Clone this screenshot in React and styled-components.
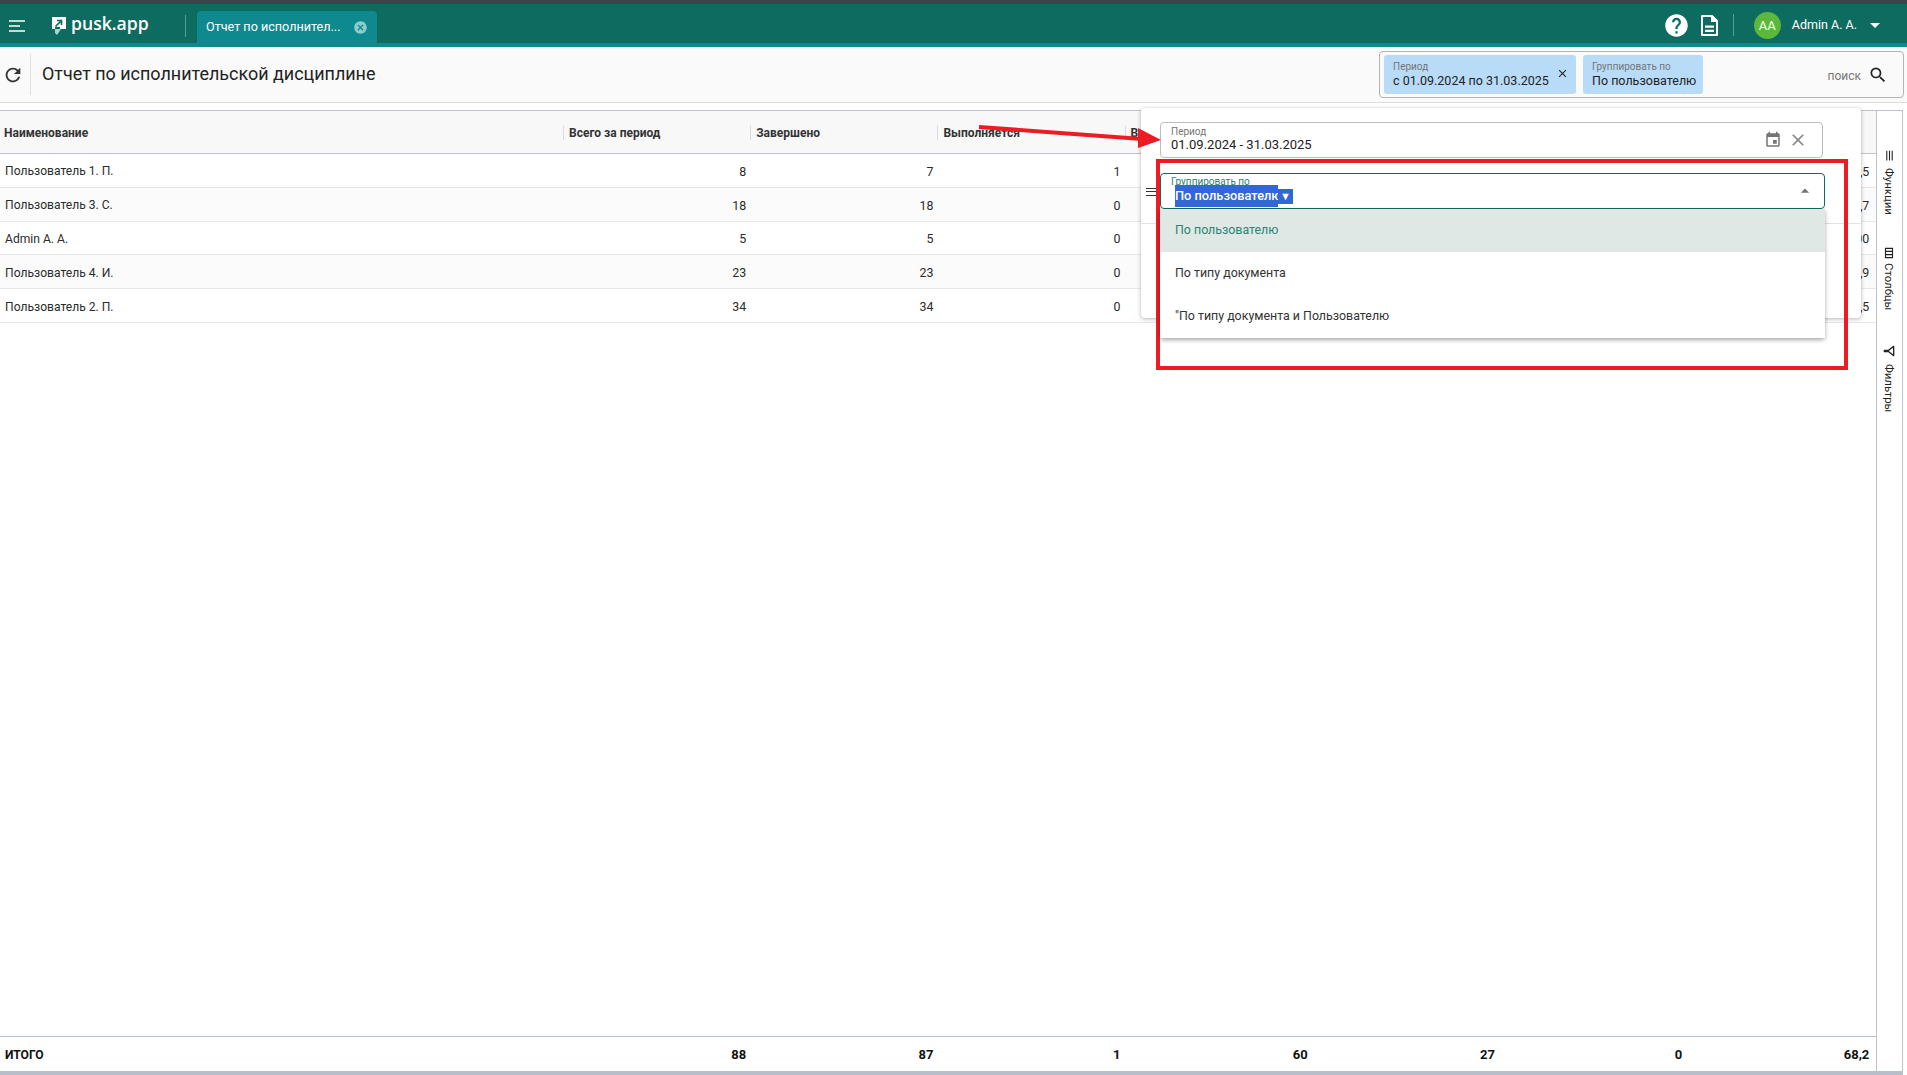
import styled, { createGlobalStyle } from 'styled-components';
import {
  MdRefresh, MdSearch, MdClose, MdEvent, MdHelp, MdArrowDropDown, MdArrowDropUp,
  MdCancel, MdMenu, MdOutlineFilterAlt, MdOutlineViewColumn,
} from 'react-icons/md';

const GlobalStyle = createGlobalStyle`
  html, body { margin: 0; padding: 0; height: 100%; background: #fff; overflow: hidden; }
  body { font-family: Roboto, "Liberation Sans", sans-serif; color: #222; }
  #root { height: 100%; }
`;

const rows = [
  { name: 'Пользователь 1. П.', cells: ['8', '7', '1', '5', '2', '0', '62,5'] },
  { name: 'Пользователь 3. С.', cells: ['18', '18', '0', '12', '6', '0', '66,7'] },
  { name: 'Admin A. A.', cells: ['5', '5', '0', '5', '0', '0', '100'] },
  { name: 'Пользователь 4. И.', cells: ['23', '23', '0', '17', '6', '0', '73,9'] },
  { name: 'Пользователь 2. П.', cells: ['34', '34', '0', '21', '13', '0', '61,5'] },
];
const heads = ['Всего за период', 'Завершено', 'Выполняется', 'Выполнено в срок', 'Просрочено', 'Отменено', '% в срок'];
const totals = ['88', '87', '1', '60', '27', '0', '68,2'];

const App = () => (
  <Page>
    <GlobalStyle />
    <TopEdge />
    <AppBar>
      <BarLeft>
        <Burger viewBox="0 0 16 12">
          <path d="M0 1h16M0 6h11M0 11h16" stroke="#fff" strokeWidth="1.7" fill="none" />
        </Burger>
        <Logo>
          <svg width="16" height="20" viewBox="0 0 16 20">
            <path d="M4 13h6l-4 6-2-2z" fill="#a9d6cd" />
            <path d="M1 1h14v12H9v-2H4v2H1z" fill="#fff" />
            <path d="M4.5 10.5L10 5M6 4.5h4.5V9" stroke="#0d6b5f" strokeWidth="1.7" fill="none" />
          </svg>
          <LogoText>pusk.app</LogoText>
        </Logo>
        <BarDivider />
        <Tab>
          <TabText>Отчет по исполнител...</TabText>
          <TabClose><MdCancel /></TabClose>
        </Tab>
      </BarLeft>
      <BarRight>
        <MdHelp size={27} color="#fff" />
        <DocIcon width="17" height="21" viewBox="0 0 17 21">
          <path d="M1 1h10l5 5v14H1z" fill="none" stroke="#fff" strokeWidth="2" strokeLinejoin="round" />
          <path d="M10 1h2l4 4v2h-6zM4 10.5h9v2.2H4zM4 14.8h9V17H4z" fill="#fff" />
        </DocIcon>
        <BarDivider />
        <Avatar>AA</Avatar>
        <UserName>Admin A. A.</UserName>
        <MdArrowDropDown size={24} color="#fff" />
      </BarRight>
    </AppBar>

    <Toolbar>
      <RefreshButton><MdRefresh size={22} /></RefreshButton>
      <Title>Отчет по исполнительской дисциплине</Title>
      <SearchBox>
        <Chip $width={192}>
          <ChipBody>
            <ChipLabel>Период</ChipLabel>
            <ChipValue>с 01.09.2024 по 31.03.2025</ChipValue>
          </ChipBody>
          <ChipClose><MdClose size={13} /></ChipClose>
        </Chip>
        <Chip $width={120}>
          <ChipBody>
            <ChipLabel>Группировать по</ChipLabel>
            <ChipValue>По пользователю</ChipValue>
          </ChipBody>
        </Chip>
        <SearchText>поиск</SearchText>
        <SearchIcon><MdSearch size={20} /></SearchIcon>
      </SearchBox>
    </Toolbar>

    <Main>
      <Table>
        <HeadRow>
          <HeadCell>Наименование</HeadCell>
          {heads.map((h) => <HeadCell key={h} $sep>{h}</HeadCell>)}
        </HeadRow>
        {rows.map((r, i) => (
          <Row key={r.name} $odd={i % 2 === 1}>
            <NameCell>{r.name}</NameCell>
            {r.cells.map((c, j) => <NumCell key={j}>{c}</NumCell>)}
          </Row>
        ))}
        <Spacer />
        <TotalRow>
          <NameCell>ИТОГО</NameCell>
          {totals.map((c, j) => <NumCell key={j}>{c}</NumCell>)}
        </TotalRow>
      </Table>

      <SideBar>
        <SideItem $gap={6}>
          <SideIcon><MdMenu size={13} /></SideIcon>
          Функции
        </SideItem>
        <SideItem $gap={3}>
          <SideIcon><MdOutlineViewColumn size={14} /></SideIcon>
          Столбцы
        </SideItem>
        <SideItem $gap={5}>
          <SideIcon><MdOutlineFilterAlt size={16} /></SideIcon>
          Фильтры
        </SideItem>
      </SideBar>

      <Popover>
        <PopRow>
          <Field>
            <FieldBody>
              <FieldLabel>Период</FieldLabel>
              <FieldValue>01.09.2024 - 31.03.2025</FieldValue>
            </FieldBody>
            <MdEvent size={18} color="#757575" />
            <MdClose size={20} color="#8a8a8a" />
          </Field>
        </PopRow>
        <PopRow $last>
          <DragHandle />
          <ActiveField>
            <ActiveBody>
              <FieldLabel $active>Группировать по</FieldLabel>
            </ActiveBody>
            <Selected>
              <SelectedText>По пользователю</SelectedText>
              <SelectedCaret>▼</SelectedCaret>
            </Selected>
            <MdArrowDropUp size={20} color="#757575" />
            <Menu>
              <MenuItem $on>По пользователю</MenuItem>
              <MenuItem>По типу документа</MenuItem>
              <MenuItem>"По типу документа и Пользователю</MenuItem>
            </Menu>
          </ActiveField>
        </PopRow>
      </Popover>

      <RedFrame />
      <RedArrow viewBox="0 0 190 30" width="190" height="30">
        <path d="M2 2L165 14" stroke="#ed1c24" strokeWidth="4" fill="none" />
        <path d="M161 3L184 15L161 23z" fill="#ed1c24" />
      </RedArrow>
    </Main>
  </Page>
);

export default App;

const Page = styled.div`
  display: flex;
  flex-direction: column;
  height: 1075px;
  overflow: hidden;
`;

const TopEdge = styled.div`
  height: 4px;
  background: #3f444b;
`;

const AppBar = styled.header`
  height: 39px;
  display: flex;
  align-items: stretch;
  justify-content: space-between;
  background: #0d6b5f;
  border-bottom: 4px solid #0e8a8f;
`;

const BarLeft = styled.div`
  display: flex;
  align-items: center;
  padding: 4px 0 0 9px;
`;

const Burger = styled.svg`
  width: 16px;
  height: 12px;
  margin-right: 26px;
`;

const Logo = styled.div`
  display: flex;
  align-items: center;
  gap: 4px;
  width: 134px;
  color: #fff;
`;

const LogoText = styled.span`
  font-family: "Open Sans", Roboto, sans-serif;
  font-size: 17.6px;
  font-weight: 600;
  line-height: 1;
  margin-top: -4px;
`;

const BarDivider = styled.div`
  width: 1px;
  height: 22px;
  background: #5d9d94;
`;

const Tab = styled.div`
  align-self: flex-end;
  display: flex;
  align-items: center;
  justify-content: space-between;
  box-sizing: border-box;
  width: 180px;
  height: 32px;
  margin-left: 11px;
  padding: 0 9px;
  background: #0e8a8f;
  border-radius: 4px 4px 0 0;
  color: #fff;
`;

const TabText = styled.span`
  font-size: 12.6px;
  white-space: nowrap;
  margin-top: -2px;
`;

const TabClose = styled.span`
  display: flex;
  font-size: 15px;
  color: #8fcccb;
`;

const BarRight = styled.div`
  display: flex;
  align-items: center;
  padding: 3px 20px 0 0;
`;

const DocIcon = styled.svg`
  margin: 0 15px 0 11px;
`;

const Avatar = styled.div`
  width: 27px;
  height: 27px;
  margin-left: 20px;
  border-radius: 50%;
  display: flex;
  align-items: center;
  justify-content: center;
  background: #5cb83c;
  color: #fff;
  font-size: 13px;
`;

const UserName = styled.span`
  margin: -2px 6px 0 11px;
  font-size: 12.5px;
  color: #fff;
`;

const Toolbar = styled.div`
  height: 55px;
  display: flex;
  align-items: center;
  background: #fafafa;
  border-bottom: 1px solid #dcdcdc;
  padding-right: 3px;
`;

const RefreshButton = styled.div`
  width: 31px;
  height: 41px;
  box-sizing: border-box;
  display: flex;
  align-items: center;
  padding-left: 2px;
  border-right: 1px solid #e2e2e2;
  color: #333;
  margin-right: 11px;
`;

const Title = styled.h1`
  margin: 0 0 2px;
  font-size: 17.95px;
  font-weight: 400;
  color: #222;
  flex: 1;
`;

const SearchBox = styled.div`
  width: 525px;
  height: 47px;
  box-sizing: border-box;
  display: flex;
  align-items: center;
  gap: 7px;
  padding: 0 15px 0 4px;
  border: 1px solid #b5b5b5;
  border-radius: 4px;
`;

const Chip = styled.div`
  width: ${(p) => p.$width}px;
  height: 39px;
  box-sizing: border-box;
  display: flex;
  align-items: center;
  justify-content: space-between;
  padding: 0 9px;
  background: #b8dcf8;
  border-radius: 3px;
`;

const ChipBody = styled.div`
  display: flex;
  flex-direction: column;
`;

const ChipClose = styled.span`
  display: flex;
  margin: -2px -2px 0 0;
`;

const ChipLabel = styled.span`
  font-size: 10px;
  line-height: 12px;
  color: #757575;
`;

const ChipValue = styled.span`
  font-size: 12.5px;
  line-height: 16px;
  color: #222;
  white-space: nowrap;
`;

const SearchText = styled.span`
  margin: 2px 0 0 auto;
  font-size: 12px;
  color: #777;
`;

const SearchIcon = styled.span`
  display: flex;
  color: #222;
`;

const Main = styled.main`
  flex: 1;
  position: relative;
  display: flex;
  padding-top: 7px;
  min-height: 0;
`;

const Table = styled.div`
  width: 1876px;
  display: flex;
  flex-direction: column;
  border-top: 1px solid #bfc3c9;
  border-bottom: 4px solid #b8bfca;
`;

const gridColumns = '563px repeat(7, 187.2px)';

const HeadRow = styled.div`
  display: grid;
  grid-template-columns: ${gridColumns};
  height: 42px;
  align-items: center;
  background: #f8f8f8;
  border-bottom: 1px solid #bfc3c9;
`;

const HeadCell = styled.div`
  height: 14px;
  line-height: 14px;
  margin-top: 2px;
  padding-left: ${(p) => (p.$sep ? '5px' : '4px')};
  border-left: ${(p) => (p.$sep ? '1px solid #dcdcdc' : 'none')};
  font-size: 12px;
  font-weight: 700;
  color: #333;
  white-space: nowrap;
  overflow: hidden;
`;

const Row = styled.div`
  display: grid;
  grid-template-columns: ${gridColumns};
  height: 33.8px;
  box-sizing: border-box;
  align-items: center;
  padding-top: 2px;
  background: ${(p) => (p.$odd ? '#fbfbfb' : '#fff')};
  border-bottom: 1px solid #e4e7ec;
  font-size: 12.4px;
  color: #2b2b2b;
`;

const NameCell = styled.div`
  padding-left: 5px;
  font-size: 12.1px;
  white-space: nowrap;
`;

const NumCell = styled.div`
  padding-right: 4px;
  text-align: right;
`;

const Spacer = styled.div`
  flex: 1;
`;

const TotalRow = styled.div`
  display: grid;
  grid-template-columns: ${gridColumns};
  height: 35px;
  box-sizing: border-box;
  padding-top: 1px;
  align-items: center;
  border-top: 1px solid #b8bfca;
  font-size: 13px;
  font-weight: 700;
  color: #111;
`;

const SideBar = styled.aside`
  width: 27px;
  box-sizing: border-box;
  display: flex;
  flex-direction: column;
  align-items: center;
  gap: 29px;
  padding: 38px 1px 0 0;
  border-top: 1px solid #bfc3c9;
  border-left: 1px solid #bfc3c9;
  border-right: 1px solid #bfc3c9;
  border-bottom: 4px solid #b8bfca;
`;

const SideItem = styled.div`
  writing-mode: vertical-rl;
  height: 68px;
  display: flex;
  align-items: center;
  gap: ${(p) => p.$gap}px;
  font-size: 11.4px;
  color: #222;
`;

const SideIcon = styled.span`
  display: flex;
  transform: rotate(90deg);
`;

const Popover = styled.div`
  position: absolute;
  top: 5px;
  right: 46px;
  width: 720px;
  height: 210px;
  box-sizing: border-box;
  background: #fff;
  border-radius: 4px;
  box-shadow: 0 1px 4px rgba(0, 0, 0, 0.3);
`;

const PopRow = styled.div`
  position: relative;
  padding: ${(p) => (p.$last ? '15px 36px 14px 19px' : '14px 38px 0 19px')};
  border-bottom: ${(p) => (p.$last ? '1px solid #e2e2e2' : 'none')};
`;

const DragHandle = styled.div`
  position: absolute;
  left: 5px;
  top: 30px;
  width: 10px;
  height: 6px;
  border-top: 1px solid #333;
  border-bottom: 1px solid #333;
  &::after {
    content: '';
    display: block;
    margin-top: 2px;
    border-top: 1px solid #333;
  }
`;

const Field = styled.div`
  height: 36px;
  box-sizing: border-box;
  display: flex;
  align-items: center;
  gap: 6px;
  padding: 0 14px 0 10px;
  border: 1px solid #bdbdbd;
  border-radius: 4px;
`;

const ActiveField = styled(Field)`
  position: relative;
  padding-right: 9px;
  border-color: #0d6b5f;
`;

const FieldBody = styled.div`
  flex: 1;
  display: flex;
  flex-direction: column;
  margin-top: -2px;
`;

const ActiveBody = styled(FieldBody)`
  align-self: flex-start;
  margin-top: 2px;
`;

const FieldLabel = styled.span`
  font-size: 10px;
  line-height: 11px;
  color: ${(p) => (p.$active ? '#2d8272' : '#757575')};
`;

const FieldValue = styled.span`
  font-size: 13px;
  line-height: 16px;
  color: #222;
`;

const Selected = styled.div`
  position: absolute;
  left: 14px;
  top: 11px;
  display: flex;
  align-items: center;
`;

const SelectedText = styled.span`
  width: 103px;
  height: 22px;
  overflow: hidden;
  background: #3366d6;
  color: #fff;
  font-size: 12.8px;
  font-weight: 500;
  line-height: 22px;
  white-space: nowrap;
`;

const SelectedCaret = styled.span`
  width: 15px;
  height: 15px;
  background: #3366d6;
  color: #fff;
  font-size: 11px;
  line-height: 15px;
  text-align: center;
`;

const Menu = styled.div`
  position: absolute;
  left: -1px;
  right: -1px;
  top: 35px;
  background: #fff;
  border-radius: 0 0 4px 4px;
  box-shadow: 0 2px 4px rgba(0, 0, 0, 0.35);
  z-index: 2;
`;

const MenuItem = styled.div`
  height: 43px;
  box-sizing: border-box;
  display: flex;
  align-items: center;
  padding: 0 0 2px 15px;
  font-size: 12.4px;
  color: ${(p) => (p.$on ? '#2d8272' : '#333')};
  background: ${(p) => (p.$on ? '#e0e8e6' : '#fff')};
`;

const RedFrame = styled.div`
  position: absolute;
  left: 1156px;
  top: 56px;
  width: 692px;
  height: 211px;
  box-sizing: border-box;
  border: 4px solid #ed1c24;
  pointer-events: none;
`;

const RedArrow = styled.svg`
  position: absolute;
  left: 977px;
  top: 22px;
`;
